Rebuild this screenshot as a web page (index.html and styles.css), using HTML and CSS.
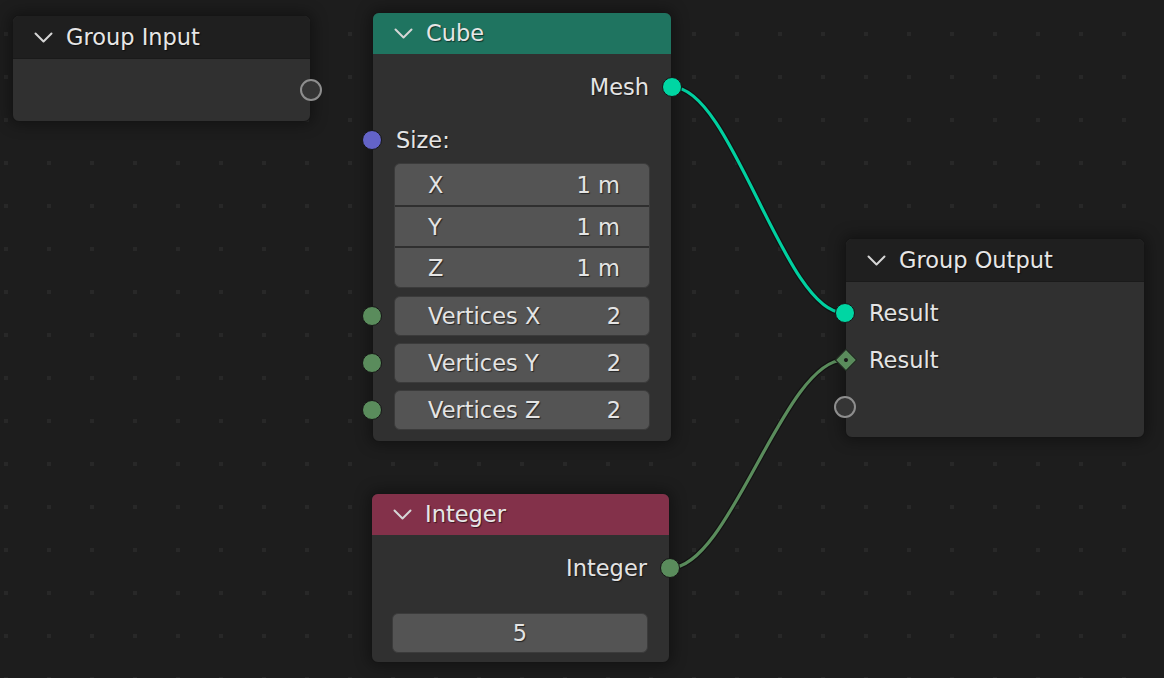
FILE: index.html
```html
<!DOCTYPE html>
<html>
<head>
<meta charset="utf-8">
<link rel="stylesheet" href="styles.css">
</head>
<body>
<div class="canvas">
  <svg class="links" width="1164" height="678" viewBox="0 0 1164 678">
    <path class="link-edge" d="M672 87 C732 87 784 313 844 313"/>
    <path class="link link-geo" d="M672 87 C732 87 784 313 844 313"/>
    <path class="link-edge" d="M670 568 C730 568 784 360 844 360"/>
    <path class="link link-int" d="M670 568 C730 568 784 360 844 360"/>
  </svg>

  <div class="node n-group-input">
    <div class="node-header header-dark">
      <svg class="chev" width="19" height="11" viewBox="0 0 19 11"><polyline points="1.5,1.5 9.5,9.5 17.5,1.5"/></svg>
      <span class="title">Group Input</span>
    </div>
    <div class="node-body gi-body">
      <span class="socket out empty"></span>
    </div>
  </div>

  <div class="node n-cube">
    <div class="node-header header-geo">
      <svg class="chev" width="19" height="11" viewBox="0 0 19 11"><polyline points="1.5,1.5 9.5,9.5 17.5,1.5"/></svg>
      <span class="title">Cube</span>
    </div>
    <div class="node-body cube-body">
      <div class="row right">
        <span class="label">Mesh</span>
        <span class="socket out geo"></span>
      </div>
      <div class="row size-row">
        <span class="socket in vec"></span>
        <span class="label">Size:</span>
      </div>
      <div class="vector">
        <div class="vrow"><span>X</span><span>1 m</span></div>
        <div class="vrow"><span>Y</span><span>1 m</span></div>
        <div class="vrow"><span>Z</span><span>1 m</span></div>
      </div>
      <div class="frow">
        <span class="socket in int"></span>
        <div class="field"><span>Vertices X</span><span>2</span></div>
      </div>
      <div class="frow">
        <span class="socket in int"></span>
        <div class="field"><span>Vertices Y</span><span>2</span></div>
      </div>
      <div class="frow">
        <span class="socket in int"></span>
        <div class="field"><span>Vertices Z</span><span>2</span></div>
      </div>
    </div>
  </div>

  <div class="node n-group-output">
    <div class="node-header header-dark">
      <svg class="chev" width="19" height="11" viewBox="0 0 19 11"><polyline points="1.5,1.5 9.5,9.5 17.5,1.5"/></svg>
      <span class="title">Group Output</span>
    </div>
    <div class="node-body go-body">
      <div class="row">
        <span class="socket in geo"></span>
        <span class="label">Result</span>
      </div>
      <div class="row">
        <span class="diamond"><span class="diamond-dot"></span></span>
        <span class="label">Result</span>
      </div>
      <div class="row">
        <span class="socket in empty"></span>
      </div>
    </div>
  </div>

  <div class="node n-integer">
    <div class="node-header header-input">
      <svg class="chev" width="19" height="11" viewBox="0 0 19 11"><polyline points="1.5,1.5 9.5,9.5 17.5,1.5"/></svg>
      <span class="title">Integer</span>
    </div>
    <div class="node-body int-body">
      <div class="row right">
        <span class="label">Integer</span>
        <span class="socket out int"></span>
      </div>
      <div class="field center-field"><span>5</span></div>
    </div>
  </div>
</div>
</body>
</html>
```

FILE: styles.css
```css
* { box-sizing: border-box; }

html, body {
  margin: 0;
  padding: 0;
  background: #1d1d1d;
}

.canvas {
  position: relative;
  width: 1164px;
  height: 678px;
  overflow: hidden;
  background-color: #1d1d1d;
  background-image: conic-gradient(from 270deg at 4px 4px, #282828 25%, transparent 0);
  background-size: 43px 43px;
  background-position: 4px 32px;
  font-family: "DejaVu Sans", Inter, sans-serif;
  font-size: 22.5px;
  color: #e4e4e4;
}

.links {
  position: absolute;
  left: 0;
  top: 0;
}

.link-edge {
  fill: none;
  stroke: rgba(10, 10, 10, 0.55);
  stroke-width: 5.5;
}

.link {
  fill: none;
  stroke-width: 3.2;
}

.link-geo { stroke: #00d0a0; }
.link-int { stroke: #5a8c5c; }

.node {
  position: absolute;
  background: #303030;
  border: 1px solid #151515;
  border-radius: 7px;
  box-shadow: 0 0 14px 3px rgba(0, 0, 0, 0.35);
  text-shadow: 1px 1px 1px rgba(0, 0, 0, 0.55);
}

.n-group-input { left: 12px; top: 15px; width: 299px; }
.n-cube { left: 372px; top: 12px; width: 300px; }
.n-group-output { left: 845px; top: 238px; width: 300px; }
.n-integer { left: 371px; top: 493px; width: 299px; }

.node-header {
  display: flex;
  align-items: center;
  gap: 13px;
  padding-left: 21px;
  border-radius: 6px 6px 0 0;
  height: 41px;
}

.header-dark {
  height: 43px;
  background: #1f1f1f;
  border-bottom: 1px solid #1a1a1a;
}

.header-geo { background: #1f7460; }
.header-input { background: #83314a; }

.chev {
  flex: none;
}

.chev polyline {
  fill: none;
  stroke: #d6d6d6;
  stroke-width: 2;
  stroke-linecap: round;
  stroke-linejoin: round;
}

.title {
  color: #e6e6e6;
  line-height: 1;
}

.node-body {
  position: relative;
  display: flex;
  flex-direction: column;
}

.gi-body {
  height: 62px;
  border-radius: 0 0 6px 6px;
}

.gi-body .socket {
  top: 50%;
}

.row {
  position: relative;
  height: 36px;
  display: flex;
  align-items: center;
  padding: 0 22px 0 23px;
}

.row.right {
  justify-content: flex-end;
}

.label {
  line-height: 1;
}

.socket {
  position: absolute;
  top: 50%;
  width: 20px;
  height: 20px;
  margin-top: -10px;
  border-radius: 50%;
  border: 1.5px solid #161616;
}

.socket.in { left: -11px; }
.socket.out { right: -11px; }

.socket.geo { background: #00d6a3; }
.socket.vec { background: #6363c7; }
.socket.int { background: #5a8c5c; }
.socket.empty {
  background: #353535;
  border: 2px solid #8e8e8e;
  width: 22px;
  height: 22px;
  margin-top: -11px;
}
.socket.out.empty { right: -12px; }
.socket.in.empty { left: -12px; }

.diamond {
  position: absolute;
  left: -8px;
  top: 50%;
  width: 16px;
  height: 16px;
  margin-top: -8px;
  background: #5a8c5c;
  border: 1.5px solid #161616;
  transform: rotate(45deg);
  display: flex;
  align-items: center;
  justify-content: center;
}

.diamond-dot {
  width: 4px;
  height: 4px;
  border-radius: 50%;
  background: #1a1a1a;
}

/* Cube body */
.cube-body {
  padding: 15px 0 11px;
}

.size-row {
  margin-top: 17px;
}

.vector {
  margin: 5px 21px 0 21px;
  background: #545454;
  border: 1px solid #3b3b3b;
  border-radius: 6px;
  overflow: hidden;
}

.vrow {
  height: 41px;
  display: flex;
  align-items: center;
  justify-content: space-between;
  padding: 0 29px 0 33px;
}

.vrow + .vrow {
  border-top: 2px solid #2f2f2f;
}

.frow {
  position: relative;
  margin-top: 7px;
  padding: 0 21px;
}

.vector + .frow {
  margin-top: 8px;
}

.field {
  height: 40px;
  display: flex;
  align-items: center;
  justify-content: space-between;
  padding: 0 28px 0 33px;
  background: #545454;
  border: 1px solid #3b3b3b;
  border-radius: 6px;
}

/* Group output */
.go-body {
  padding: 13px 0 12px;
  gap: 11px;
}

/* Integer */
.int-body {
  padding: 15px 0 9px;
}

.center-field {
  margin: 27px 21px 0 20px;
  justify-content: center;
  padding: 0;
}
```
